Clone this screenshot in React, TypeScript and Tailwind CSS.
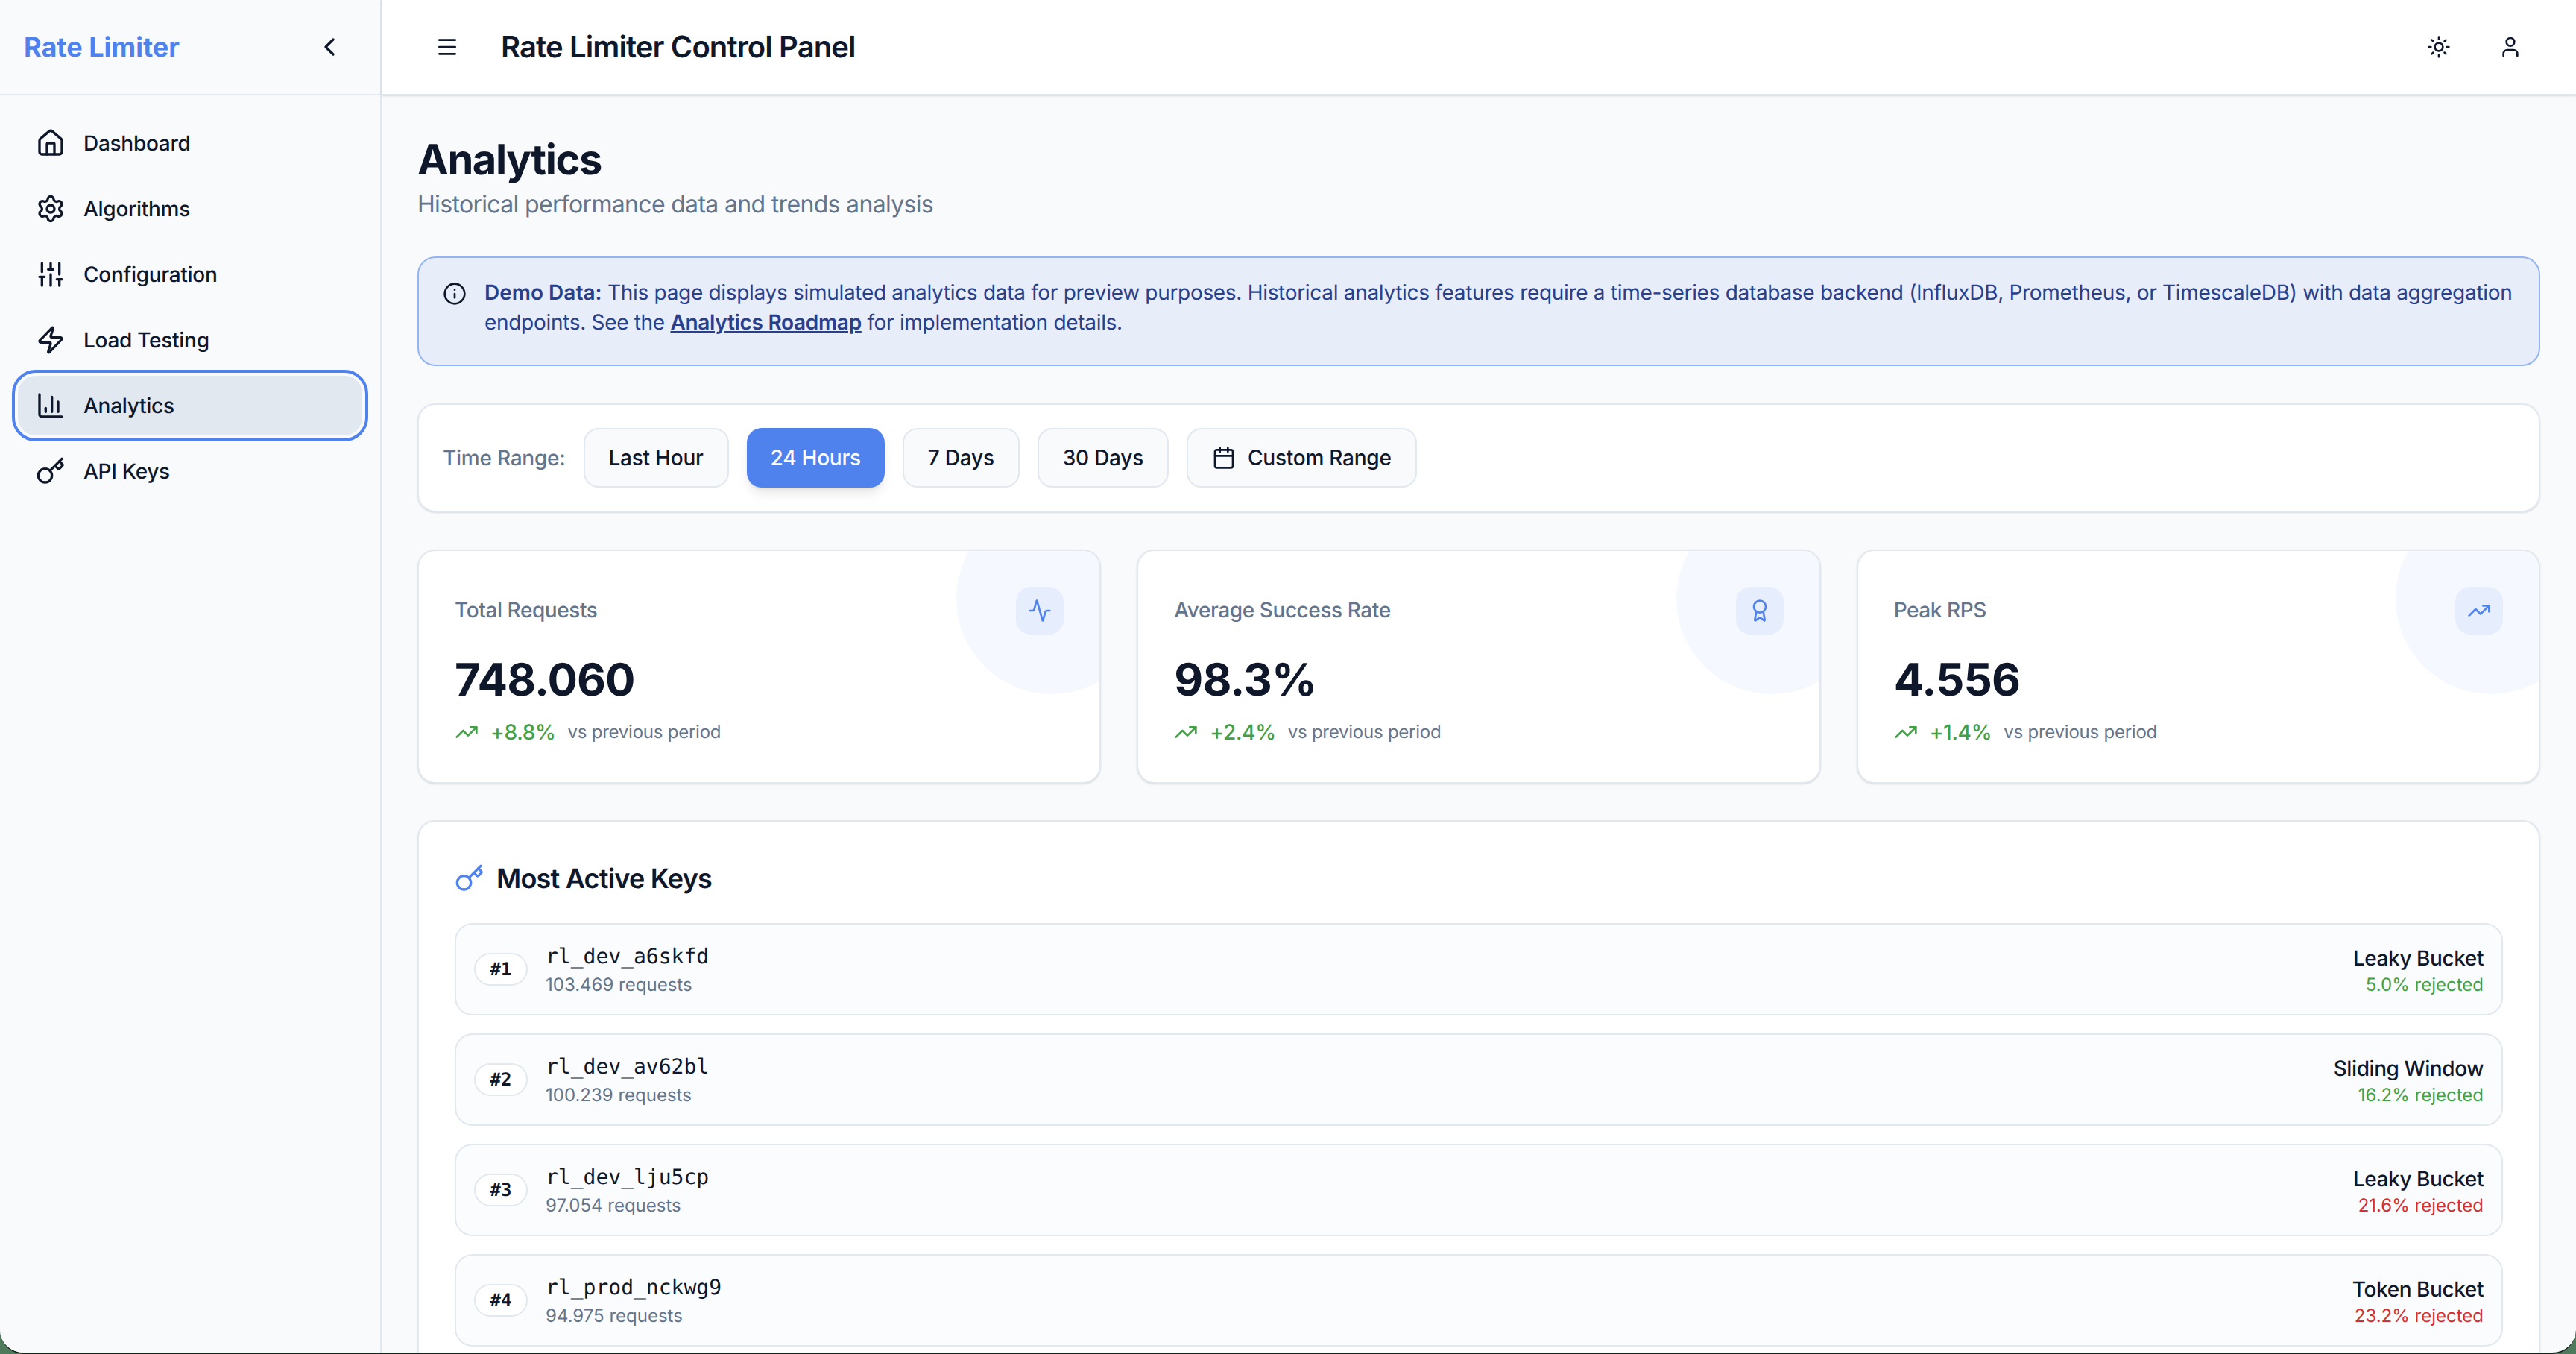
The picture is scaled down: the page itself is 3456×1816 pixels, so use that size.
import {
  Activity,
  Award,
  BarChart3,
  Calendar,
  ChevronLeft,
  Home,
  Info,
  Key,
  Menu,
  Settings,
  Sliders,
  Sun,
  TrendingUp,
  User,
  Zap,
} from "lucide-react";

const nav = [
  { label: "Dashboard", icon: Home },
  { label: "Algorithms", icon: Settings },
  { label: "Configuration", icon: Sliders },
  { label: "Load Testing", icon: Zap },
  { label: "Analytics", icon: BarChart3, active: true },
  { label: "API Keys", icon: Key },
];

const ranges = ["Last Hour", "24 Hours", "7 Days", "30 Days"];

const stats = [
  { label: "Total Requests", value: "748.060", change: "+8.8%", icon: Activity },
  { label: "Average Success Rate", value: "98.3%", change: "+2.4%", icon: Award },
  { label: "Peak RPS", value: "4.556", change: "+1.4%", icon: TrendingUp },
];

const keys = [
  { rank: "#1", name: "rl_dev_a6skfd", requests: "103.469 requests", algo: "Leaky Bucket", rejected: "5.0% rejected", bad: false },
  { rank: "#2", name: "rl_dev_av62bl", requests: "100.239 requests", algo: "Sliding Window", rejected: "16.2% rejected", bad: false },
  { rank: "#3", name: "rl_dev_lju5cp", requests: "97.054 requests", algo: "Leaky Bucket", rejected: "21.6% rejected", bad: true },
  { rank: "#4", name: "rl_prod_nckwg9", requests: "94.975 requests", algo: "Token Bucket", rejected: "23.2% rejected", bad: true },
];

function Sidebar() {
  return (
    <aside className="flex w-[512px] shrink-0 flex-col border-r-2 border-[#e2e8f0] bg-[#f8fafc]">
      <div className="flex h-[128px] shrink-0 items-center justify-between border-b-2 border-[#e2e8f0] pr-[48px] pl-[32px]">
        <span className="text-[36px] font-bold text-[#5082ee]">Rate Limiter</span>
        <ChevronLeft size={40} strokeWidth={2} className="text-[#0f172a]" />
      </div>
      <nav className="flex flex-col gap-[8px] px-[24px] pt-[24px]">
        {nav.map((item) => (
          <div
            key={item.label}
            className={
              item.active
                ? "flex h-[80px] items-center gap-[24px] rounded-[24px] bg-[#e2e8f0] px-[24px] text-[28px] font-medium tracking-[-0.01em] text-[#0f172a] outline-[4px] outline-offset-[4px] outline-[#5082ee]"
                : "flex h-[80px] items-center gap-[24px] rounded-[24px] px-[24px] text-[28px] font-medium tracking-[-0.01em] text-[#0f172a]"
            }
          >
            <item.icon size={40} strokeWidth={2} />
            {item.label}
          </div>
        ))}
      </nav>
    </aside>
  );
}

function Header() {
  return (
    <header className="z-10 flex h-[128px] shrink-0 items-center justify-between border-b-2 border-[#e2e8f0] bg-white px-[72px] shadow-sm">
      <div className="flex items-center gap-[56px]">
        <Menu size={32} strokeWidth={2} className="text-[#0f172a]" />
        <h1 className="text-[40px] font-semibold tracking-[-0.022em] text-[#0f172a]">Rate Limiter Control Panel</h1>
      </div>
      <div className="flex items-center gap-[64px]">
        <Sun size={32} strokeWidth={2} className="text-[#0f172a]" />
        <User size={32} strokeWidth={2} className="text-[#0f172a]" />
      </div>
    </header>
  );
}

function StatCard({ stat }: { stat: (typeof stats)[number] }) {
  return (
    <div className="relative h-[314px] overflow-hidden rounded-[24px] border-2 border-[#e2e8f0] bg-white p-[48px] shadow-sm">
      <div className="absolute -top-[64px] -right-[64px] h-[256px] w-[256px] rounded-full bg-[#f5f8fe]" />
      <div className="relative flex items-start justify-between">
        <span className="mt-[11px] text-[28px] leading-[40px] font-medium tracking-[-0.015em] text-[#64748b]">{stat.label}</span>
        <div className="flex h-[64px] w-[64px] items-center justify-center rounded-[20px] bg-[#e6edfc] text-[#5082ee]">
          <stat.icon size={32} strokeWidth={2} />
        </div>
      </div>
      <div className="relative mt-[25px] text-[60px] leading-[72px] font-bold tracking-[-0.015em] text-[#0f172a]">{stat.value}</div>
      <div className="relative mt-[13px] flex items-center">
        <TrendingUp size={32} strokeWidth={2} className="text-[#43a047]" />
        <span className="ml-[16px] text-[28px] font-medium tracking-[-0.01em] text-[#43a047]">{stat.change}</span>
        <span className="ml-[16px] text-[24px] tracking-[-0.01em] text-[#64748b]">vs previous period</span>
      </div>
    </div>
  );
}

function KeyRow({ row }: { row: (typeof keys)[number] }) {
  return (
    <div className="flex h-[124px] shrink-0 items-center justify-between rounded-[24px] border-2 border-[#e2e8f0] bg-[#fbfcfd] px-[24px]">
      <div className="flex items-center gap-[24px]">
        <span className="flex h-[44px] w-[72px] items-center justify-center rounded-full border-2 border-[#e2e8f0] bg-white font-['DejaVu_Sans_Mono',monospace] text-[24px] font-bold text-[#0f172a]">
          {row.rank}
        </span>
        <div className="flex flex-col pt-[2px]">
          <span className="font-['DejaVu_Sans_Mono',monospace] text-[28px] leading-[40px] text-[#0f172a]">{row.name}</span>
          <span className="text-[24px] leading-[36px] text-[#64748b]">{row.requests}</span>
        </div>
      </div>
      <div className="flex flex-col items-end pt-[2px]">
        <span className="text-[28px] leading-[40px] font-medium tracking-[-0.015em] text-[#0f172a]">{row.algo}</span>
        <span className={row.bad ? "text-[24px] leading-[32px] text-[#d32f2f]" : "text-[24px] leading-[32px] text-[#43a047]"}>
          {row.rejected}
        </span>
      </div>
    </div>
  );
}

export default function App() {
  return (
    <div className="h-[1816px] w-[3456px] overflow-hidden bg-[#4f7a5c] font-['Inter',sans-serif] [text-rendering:geometricPrecision]">
      <div className="flex h-full overflow-hidden rounded-b-[32px] border-b-2 border-[#16211b] bg-[#f8fafc]">
        <Sidebar />
        <div className="flex min-w-0 flex-1 flex-col">
          <Header />
          <main className="flex flex-1 flex-col overflow-hidden px-[48px] pt-[50px]">
            <h2 className="text-[56px] leading-[72px] font-bold tracking-tight text-[#0f172a]">Analytics</h2>
            <p className="text-[32px] leading-[48px] tracking-[-0.021em] text-[#64748b]">Historical performance data and trends analysis</p>

            <div className="mt-[46px] flex h-[147px] shrink-0 gap-[24px] rounded-[24px] border-2 border-[#94b4f3] bg-[#e7edf9] px-[32px] pt-[26px]">
              <Info size={32} strokeWidth={2} className="mt-[6px] shrink-0 text-[#0f172a]" />
              <p className="text-[28px] leading-[40px] tracking-[-0.011em] text-[#283f8c]">
                <strong className="font-semibold tracking-normal">Demo Data:</strong> This page displays simulated analytics data for preview purposes. Historical analytics features require a time-series database backend (InfluxDB, Prometheus, or TimescaleDB) with data aggregation endpoints. See the{" "}
                <a className="font-semibold underline">Analytics Roadmap</a> for implementation details.
              </p>
            </div>

            <div className="mt-[50px] flex h-[146px] shrink-0 items-center gap-[24px] rounded-[24px] border-2 border-[#e2e8f0] bg-white px-[32px] tracking-[-0.015em] shadow-sm">
              <span className="text-[28px] font-medium text-[#64748b]">Time Range:</span>
              {ranges.map((r) => (
                <button
                  key={r}
                  className={
                    r === "24 Hours"
                      ? "h-[80px] rounded-[20px] bg-[#5082ee] px-[32px] text-[28px] font-medium text-white shadow-lg"
                      : "h-[80px] rounded-[20px] border-2 border-[#e2e8f0] bg-[#f8fafc] px-[32px] text-[28px] font-medium text-[#0f172a]"
                  }
                >
                  {r}
                </button>
              ))}
              <button className="flex h-[80px] items-center gap-[16px] rounded-[20px] border-2 border-[#e2e8f0] bg-[#f8fafc] px-[32px] text-[28px] font-medium text-[#0f172a]">
                <Calendar size={32} strokeWidth={2} />
                Custom Range
              </button>
            </div>

            <div className="mt-[50px] grid shrink-0 grid-cols-3 gap-[48px]">
              {stats.map((s) => (
                <StatCard key={s.label} stat={s} />
              ))}
            </div>

            <div className="mt-[49px] flex flex-col rounded-[24px] border-2 border-[#e2e8f0] bg-white px-[48px] pt-[54px] pb-[48px] shadow-sm">
              <div className="flex items-center gap-[16px]">
                <Key size={40} strokeWidth={2} className="text-[#5082ee]" />
                <h3 className="text-[36px] leading-[44px] font-semibold tracking-[-0.022em] text-[#0f172a]">Most Active Keys</h3>
              </div>
              <div className="mt-[38px] flex flex-col gap-[24px]">
                {keys.map((k) => (
                  <KeyRow key={k.rank} row={k} />
                ))}
              </div>
            </div>
          </main>
        </div>
      </div>
    </div>
  );
}
